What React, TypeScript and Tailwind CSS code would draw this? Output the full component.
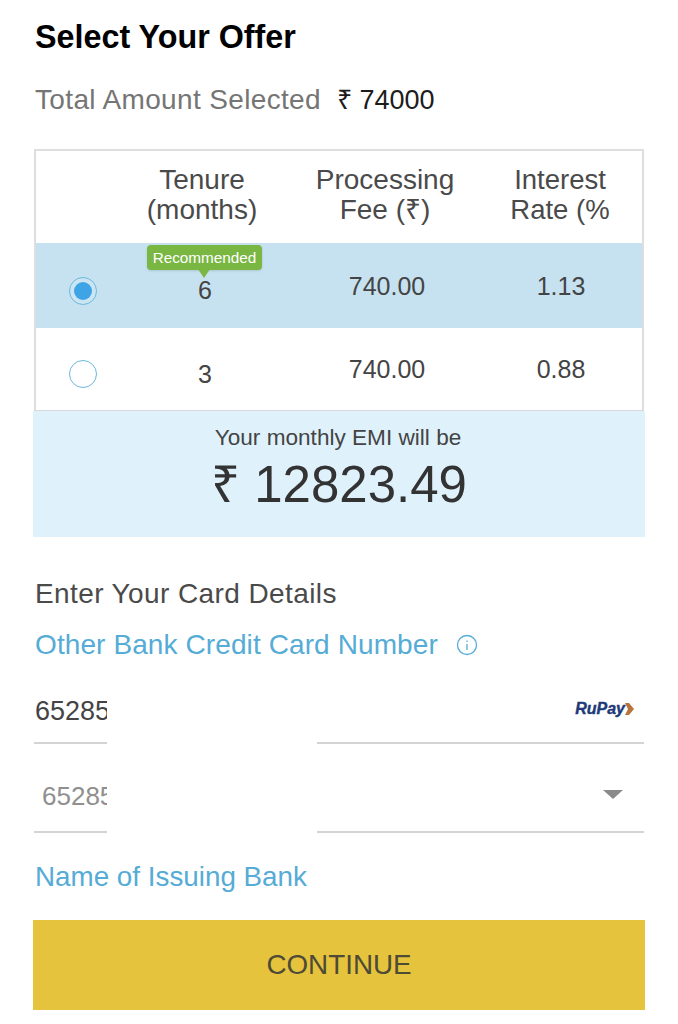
const rows = [
  { tenure: '6', fee: '740.00', rate: '1.13', selected: true },
  { tenure: '3', fee: '740.00', rate: '0.88', selected: false },
]

const cols = 'grid grid-cols-[95px_148px_214px_134px]'

function Radio({ selected }: { selected: boolean }) {
  return (
    <div className="w-[28px] h-[28px] rounded-full border-[1.5px] border-[#6db8dc] bg-white/10 flex items-center justify-center">
      {selected && <div className="w-[18px] h-[18px] rounded-full bg-[#3fa4e6]" />}
    </div>
  )
}

function Underlined({ children, right, tone }: { children: React.ReactNode; right?: React.ReactNode; tone: string }) {
  return (
    <div className="grid grid-cols-[73px_210px_327px] ml-[34px] w-[610px] h-[66px]">
      <div className={`border-b-2 border-[#d4d4d4] overflow-hidden whitespace-nowrap ${tone}`}>
        {children}
      </div>
      <div />
      <div className="border-b-2 border-[#d4d4d4] flex items-center justify-end">{right}</div>
    </div>
  )
}

export default function App() {
  return (
    <div className="w-[678px] h-[1024px] bg-white overflow-hidden font-['Liberation_Sans',sans-serif] text-[#3c3c3c]">
      <h1 className="ml-[35px] pt-[18px] text-[32.3px] leading-[38px] font-bold text-black">Select Your Offer</h1>
      <div className="ml-[35px] mt-[26px] flex items-center h-[36px] text-[28px]">
        <span className="text-[#757575] tracking-[0.35px]">Total Amount Selected</span>
        <span className="ml-[16px] text-[27px] text-[#1c1c1c]">₹ 74000</span>
      </div>

      <div className="ml-[34px] mt-[31px] w-[610px] h-[262px] border-2 border-[#dedede] border-b-[#d8d8d8]">
        <div className={`${cols} h-[92px] pb-[4px] text-[28px] leading-[30px] text-center text-[#4a4a4a] items-center`}>
          <div />
          <div className="pr-[6px]">Tenure<br />(months)</div>
          <div className="pr-[2px]">Processing<br />Fee (₹)</div>
          <div className="text-[27.5px]">Interest<br />Rate (%</div>
        </div>
        {rows.map((r) => (
          <div
            key={r.tenure}
            className={`${cols} items-center text-center text-[25px] text-[#444] ${r.selected ? 'h-[85px] bg-[#c6e2f0]' : 'h-[82px] bg-white'}`}
          >
            <div className="flex justify-center pr-[2px] pt-[10px]">
              <Radio selected={r.selected} />
            </div>
            <div className="relative pt-[11px]">
              {r.tenure}
              {r.selected && (
                <div className="absolute left-[16px] top-[-16px] w-[115px] h-[25px] rounded-[4px] bg-[#7ab642] text-white text-[15.3px] leading-[25px] shadow-sm">
                  Recommended
                  <div className="absolute left-[51px] top-[24px] w-0 h-0 border-x-[6px] border-x-transparent border-t-[9px] border-t-[#7ab642]" />
                </div>
              )}
            </div>
            <div className="pl-[2px] pt-[2px]">{r.fee}</div>
            <div className="pl-[2px] pt-[2px]">{r.rate}</div>
          </div>
        ))}
      </div>

      <div className="ml-[33px] w-[612px] h-[126px] bg-[#dff2fc] text-center">
        <div className="pt-[13px] pr-[2px] text-[22.6px] leading-[28px] text-[#444]">Your monthly EMI will be</div>
        <div className="mt-[3px] text-[51px] leading-[60px] text-[#333]">₹ 12823.49</div>
      </div>

      <div className="ml-[35px] mt-[39px] text-[28px] tracking-[0.4px] leading-[36px] text-[#4a4a4a]">Enter Your Card Details</div>
      <div className="ml-[35px] mt-[15px] flex items-center text-[28px] tracking-[0.1px] leading-[36px] text-[#55acd6]">
        Other Bank Credit Card Number
        <svg className="ml-[18px]" width="22" height="22" viewBox="0 0 22 22" fill="none" stroke="#55acd6" strokeWidth="1.3">
          <circle cx="11" cy="11" r="9.5" />
          <path d="M11 10v6M11 6.5v1.6" />
        </svg>
      </div>

      <div className="mt-[15px]">
        <Underlined
          tone="text-[27px] leading-[66px] text-[#444] pl-[1px]"
          right={
            <span className="mr-[10px] mb-[2px] text-[16px] font-bold italic text-[#1d3a78] [-webkit-text-stroke:0.4px_#1d3a78] flex items-center">
              RuPay
              <svg width="9" height="12" viewBox="0 0 9 12">
                <path d="M0 0l4 0 5 6-5 6-4 0 3-6z" fill="#b8743a" />
              </svg>
            </span>
          }
        >
          65285
        </Underlined>
      </div>
      <div className="mt-[23px]">
        <Underlined
          tone="text-[26px] leading-[58px] text-[#8f8f8f] pl-[8px]"
          right={<div className="mr-[21px] mb-[9px] w-0 h-0 border-x-[10px] border-x-transparent border-t-[9px] border-t-[#8a8a8a]" />}
        >
          65285
        </Underlined>
      </div>

      <div className="ml-[35px] mt-[26px] text-[27.8px] leading-[36px] text-[#55acd6]">Name of Issuing Bank</div>
      <div className="ml-[33px] mt-[25px] w-[612px] h-[90px] bg-[#e6c33d] flex items-center justify-center text-[27.8px] text-[#4d4a35]">
        CONTINUE
      </div>
    </div>
  )
}
